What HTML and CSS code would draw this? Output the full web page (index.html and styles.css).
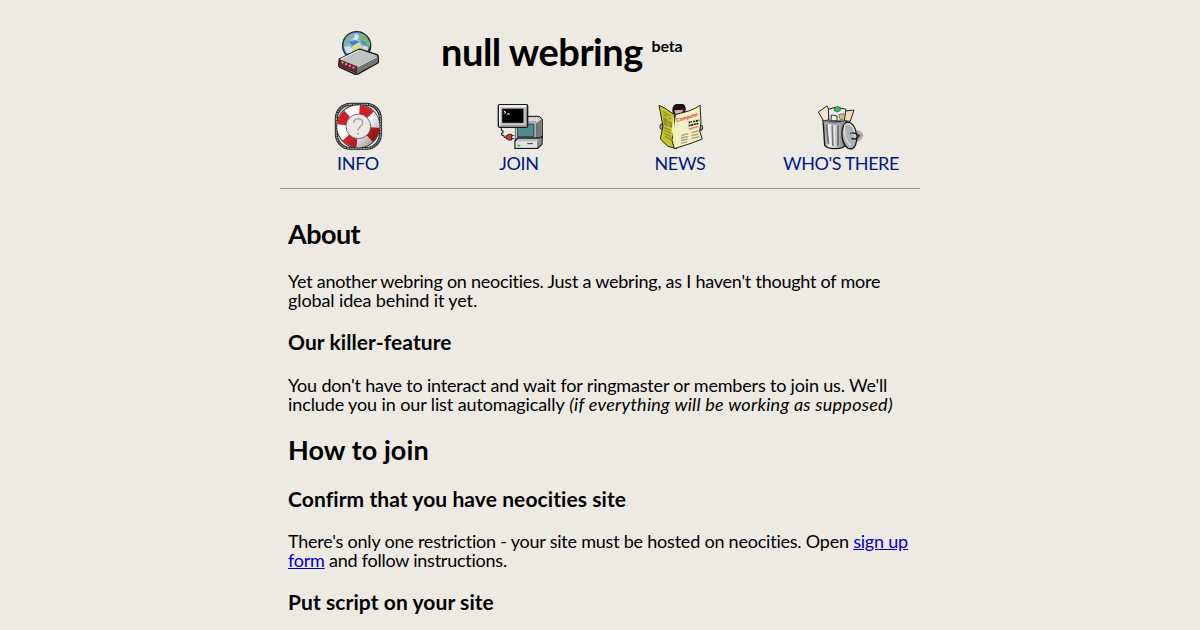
FILE: index.html
```html
<!DOCTYPE html>
<html lang="en">
<head>
<meta charset="utf-8">
<title>null webring</title>
<link rel="stylesheet" href="styles.css">
</head>
<body>
<div class="page">
  <header class="header">
    <svg class="logo" width="60" height="56" viewBox="0 0 180 168">
      <defs>
        <radialGradient id="globe" cx=".4" cy=".35" r=".65"><stop offset="0" stop-color="#a9d4f6"/><stop offset=".6" stop-color="#6496d8"/><stop offset="1" stop-color="#2b4a80"/></radialGradient>
        <clipPath id="globe-clip"><circle cx="80" cy="65" r="41"/></clipPath>
      </defs>
      <circle cx="80" cy="65" r="42" fill="url(#globe)" stroke="#1c2838" stroke-width="4"/>
      <g clip-path="url(#globe-clip)">
        <path d="M42 60l5-19 17-12 13 1-4 9-9 5-2 10-8 6-4 12-8-3z" fill="#8ab09a"/>
        <path d="M88 26l18 7 14 22 1 12-9 2-6-12-9-2-10-10 7-7-8-7z" fill="#7db172"/>
        <path d="M65 69l12-12 11-2 4 7 9 6-4 16-24 2z" fill="#dcd98a"/>
        <path d="M42 68l15-2 12 9-2 12-18 1zM75 29l12 4-4 15-14 6zM100 64l16 5-3 11-13 1z" fill="#d8eafa" opacity=".9"/>
        <path d="M60 55l15-5 9 4-16 9zM94 52l12 6" fill="#487bd0" stroke="#487bd0" stroke-width="4"/>
      </g>
      <path d="M28 105l57-28q5-3 10 0l46 15q4 2 4 7v17l-59 33q-5 3-12 1l-44-20q-4-2-4-7z" fill="#858585" stroke="#181818" stroke-width="4"/>
      <path d="M30 106l55-27q5-2 10 0l45 16-59 32z" fill="#c1c3c3"/>
      <path d="M82 129l60-31v18l-60 31z" fill="#747474"/>
      <path d="M28 108l52 20v19l-49-20q-3-2-3-6z" fill="#742129" stroke="#251a1a" stroke-width="2"/>
      <path d="M35 114l5 3M46 119l5 3M57 124l5 3M68 129l5 3" stroke="#ff9390" stroke-width="6"/>
      <path d="M32 105l55-26M83 128l57-29" stroke="#f3f3f3" stroke-width="3" fill="none"/>
    </svg>
    <h1 class="title">null webring <sup class="beta">beta</sup></h1>
  </header>
  <nav class="nav">
    <a class="nav-item" href="#info">
      <svg class="icon" width="60" height="60" viewBox="0 0 180 180">
        <defs><linearGradient id="buoy-shade" x2="1" y2="1"><stop offset=".55" stop-color="#000" stop-opacity="0"/><stop offset="1" stop-color="#000" stop-opacity=".4"/></linearGradient></defs>
        <rect x="28" y="30" width="131" height="129" rx="42" fill="none" stroke="#777" stroke-width="8" opacity=".4"/>
        <rect x="25" y="25" width="132" height="132" rx="42" fill="none" stroke="#292929" stroke-width="9"/>
        <rect x="25" y="25" width="132" height="132" rx="42" fill="none" stroke="#d6d6d6" stroke-width="3" stroke-dasharray="5 3"/>
        <circle cx="91" cy="91" r="66" fill="#242424"/>
        <circle cx="91" cy="91" r="50" fill="none" stroke="#fff" stroke-width="27"/>
        <circle cx="91" cy="91" r="50" fill="none" stroke="#cf2028" stroke-width="27" stroke-dasharray="37 41.54" transform="rotate(-86 91 91)"/>
        <circle cx="91" cy="91" r="50" fill="none" stroke="url(#buoy-shade)" stroke-width="27"/>
        <circle cx="91" cy="91" r="37" fill="#e9e8e4" stroke="#444" stroke-width="2"/>
        <path d="M77 81q1-13 14-13 13 1 13 13 0 7-8 12-6 4-6 11" fill="none" stroke="#a0a0a0" stroke-width="4"/><circle cx="90" cy="113" r="3" fill="#999"/>
      </svg>
      <span class="label">INFO</span>
    </a>
    <a class="nav-item" href="#join">
      <svg class="icon" width="60" height="60" viewBox="-3 0 180 180">
        <path d="M77 77l19-16h51l10 8v58l-13 13-67-3z" fill="#a3a3a3" stroke="#171717" stroke-width="3"/>
        <path d="M79 78l17-14h50l7 6-15 12H79z" fill="#d7d7d7"/>
        <path d="M138 83l16-12v54l-14 12z" fill="#777"/>
        <path d="M76 78h62v53H76z" fill="#ddd" stroke="#555" stroke-width="2"/>
        <path d="M82 84h50v38H82z" fill="#4c8c8c" stroke="#263f40" stroke-width="3"/>
        <path d="M75 134l8-8h67l6-5v23l-13 13H75z" fill="#bcbcbc" stroke="#181818" stroke-width="4"/>
        <path d="M77 136h64v19H77z" fill="#e2e2e2"/><path d="M141 136l13-13v20l-13 13z" fill="#8b8b8b"/>
        <path d="M82 149h9" stroke="#27c23c" stroke-width="5"/><path d="M112 143h17" stroke="#333" stroke-width="3"/>
        <path d="M25 29q0-3 4-3h80q4 0 4 4v59q0 5-5 5H30q-5 0-5-5z" fill="#d0d0d0" stroke="#181818" stroke-width="4"/>
        <path d="M29 89V30h79" fill="none" stroke="#fff" stroke-width="4"/><path d="M32 90h77V34" fill="none" stroke="#8a8a8a" stroke-width="4"/>
        <path d="M36 38h65v43H36z" fill="#000" stroke="#777" stroke-width="2"/>
        <path d="M41 45l7 4-7 4M50 54h9" fill="none" stroke="#fff" stroke-width="3"/>
        <path d="M34 96v8h5v7h-4v7h7v6h9" fill="none" stroke="#111" stroke-width="3"/><path d="M48 120l8-5h9v17h-9l-8-5z" fill="#c54138" stroke="#481515" stroke-width="3"/><path d="M65 119h8M65 128h8" stroke="#222" stroke-width="3"/>
      </svg>
      <span class="label">JOIN</span>
    </a>
    <a class="nav-item" href="#news">
      <svg class="icon" width="60" height="60" viewBox="0 0 180 180">
        <path d="M67 44q-1-17 12-20h21q10 6 6 26L88 62 69 53z" fill="#17131b"/>
        <path d="M73 43l28-2-10 17-15-5z" fill="#dfaaa1"/>
        <path d="M38 84h-5q-4 4-3 13l8 6zM151 88h5q4 5 0 14l-7 1z" fill="#d9a097" stroke="#241c1b" stroke-width="3"/>
        <path d="M27 28l17 8 29 20 7 102-26-7-23-22 8-39z" fill="#c5c52d" stroke="#25250d" stroke-width="3"/>
        <path d="M76 56l43-12 22-10 9-7 3 51-4 27 8 24-34 13-50 16-7-25z" fill="#f1efc5" stroke="#27240e" stroke-width="3"/>
        <path d="M71 58l8 97-8-19-6-35z" fill="#eef0a2"/>
        <path d="M39 47l23 13M40 56l11 6M54 65l9 4M42 66l9 5v18l-8-5zM55 76l9 5v12l-8-4M43 95l19 9M43 103l20 10M43 112l20 10M45 121l18 10" stroke="#8d9128" stroke-width="4" fill="#989a2c"/>
        <text class="paper-title" x="80" y="79" textLength="69" lengthAdjust="spacingAndGlyphs" transform="rotate(-17 80 79)">Computer</text>
        <path d="M116 80l10-3M130 77l18-4M116 89l31-7" stroke="#171717" stroke-width="5" stroke-dasharray="6 2"/>
        <path d="M117 99l28-7" stroke="#d68c72" stroke-width="4"/>
        <path d="M94 118l20-5M93 126l22-5M93 134l20-5M93 142l19-5M124 110l22-5M124 119l21-5M124 128l24-6" stroke="#a6a583" stroke-width="4"/>
      </svg>
      <span class="label">NEWS</span>
    </a>
    <a class="nav-item" href="#members">
      <svg class="icon" width="60" height="60" viewBox="3 0 180 180">
        <defs><linearGradient id="can"><stop stop-color="#858585"/><stop offset=".3" stop-color="#eee"/><stop offset=".65" stop-color="#bbb"/><stop offset="1" stop-color="#555"/></linearGradient></defs>
        <path d="M140 101q18 5 20 16-1 13-22 22z" fill="#777" opacity=".55"/>
        <path d="M39 72q27 14 71 0l-4 75q-4 11-32 11-23-1-30-10z" fill="url(#can)" stroke="#181818" stroke-width="4"/>
        <path d="M41 75q33 16 67 0" fill="none" stroke="#999" stroke-width="7"/>
        <path d="M50 87l5 54M67 90l2 58M84 90v57" stroke="#777" stroke-width="6" stroke-linecap="round"/><path d="M55 87l5 54M72 90l1 58" stroke="#f5f5f5" stroke-width="3"/>
        <path d="M25 48l26-18 8 15-4 27-14 3z" fill="#f6e3ca" stroke="#242424" stroke-width="3"/>
        <path d="M55 40l20-6 32 5v36H57z" fill="#e5eaed" stroke="#252525" stroke-width="3"/>
        <path d="M107 45l25-3-11 34-18-2z" fill="#f3dcbb" stroke="#242424" stroke-width="3"/>
        <path d="M73 36l9-5 9 4v9l-10 4-8-4z" fill="#48b251" stroke="#20552b" stroke-width="2"/>
        <path d="M86 56l15-3 4 14-14 5z" fill="#dfbb7c" stroke="#5a4630" stroke-width="2"/><path d="M64 57l17 3v14H63z" fill="#fff" stroke="#333" stroke-width="3"/>
        <ellipse cx="118" cy="119" rx="22" ry="40" transform="rotate(-7 118 119)" fill="#aeb1b3" stroke="#151515" stroke-width="4"/>
        <path d="M104 88q11-11 23 3 9 15 8 34M104 88q-4 39 17 60" fill="none" stroke="#dedede" stroke-width="4"/>
        <path d="M121 113l14-2 12 8-8 10-15-1" fill="none" stroke="#292929" stroke-width="5"/><path d="M123 114l11 2 6 5" fill="none" stroke="#ddd" stroke-width="3"/>
      </svg>
      <span class="label members">WHO'S THERE</span>
    </a>
  </nav>
  <hr class="rule">
  <main class="content">
    <h2 class="about">About</h2>
    <p><span class="tight">Yet another webring on neocities. Just a webring, as I haven't thought of more</span><br><span class="loose">global idea behind it yet.</span></p>
    <h3 class="feature">Our killer-feature</h3>
    <p><span class="medium">You don't have to interact and wait for ringmaster or members to join us. We'll</span><br><span class="loose">include you in our list automagically</span> <em class="aside">(if everything will be working as supposed)</em></p>
    <h2 class="how">How to join</h2>
    <h3 class="confirm">Confirm that you have neocities site</h3>
    <p><span class="signup">There's only one restriction - your site must be hosted on neocities. Open <a href="#signup">sign up</a></span><br><span class="tight"><a href="#signup">form</a> and follow instructions.</span></p>
    <h3 class="script">Put script on your site</h3>
  </main>
</div>
</body>
</html>
```
FILE: styles.css
```css
body {
  margin: 0;
  height: 630px;
  overflow: hidden;
  background: #edeae3;
  color: #000;
  font: 18px/19px Lato, sans-serif;
  font-variant-ligatures: none;
}
.page { width: 640px; margin: 0 auto; padding-top: 24px; }
.header { display: flex; height: 72px; padding-left: 50px; }
.logo { display: block; flex: none; }
.title {
  margin: 6px 0 0 51px;
  font-size: 38px;
  line-height: 42px;
  letter-spacing: -0.48px;
  white-space: nowrap;
}
.beta { font-size: 16px; line-height: 0; letter-spacing: -0.2px; vertical-align: 14px; }
.nav {
  display: grid;
  grid-template-columns: repeat(4, 160px);
  column-gap: 1px;
  margin-left: -2px;
}
.nav-item {
  display: flex;
  flex-direction: column;
  align-items: center;
  color: #001a80;
  text-decoration: none;
}
.icon { display: block; }
.label { margin-top: -1px; line-height: 16px; letter-spacing: -0.35px; white-space: nowrap; }
.members { letter-spacing: -0.45px; }
.paper-title { font: bold 16px "Liberation Sans", sans-serif; letter-spacing: 0; fill: #d9352d; }
.rule { height: 1px; margin: 17px 0 0; border: 0; background: #9a9897; }
.content { padding: 0 8px; }
h2, h3, p { margin: 0; white-space: nowrap; }
h2 { font-size: 27px; line-height: 30px; }
h3 { font-size: 21px; line-height: 24px; letter-spacing: 0.08px; }
a { color: #0000cc; }
.about { margin-top: 30px; margin-bottom: 23px; letter-spacing: -0.55px; }
.feature { margin: 20px 0 22px; }
.how { margin: 21px 0 22px; letter-spacing: 0.08px; }
.confirm { margin-bottom: 21px; }
.script { margin-top: 20px; }
.tight { letter-spacing: -0.24px; }
.signup { letter-spacing: -0.22px; }
.medium { letter-spacing: -0.18px; }
.loose { letter-spacing: -0.11px; }
.aside { letter-spacing: 0.27px; }
```
